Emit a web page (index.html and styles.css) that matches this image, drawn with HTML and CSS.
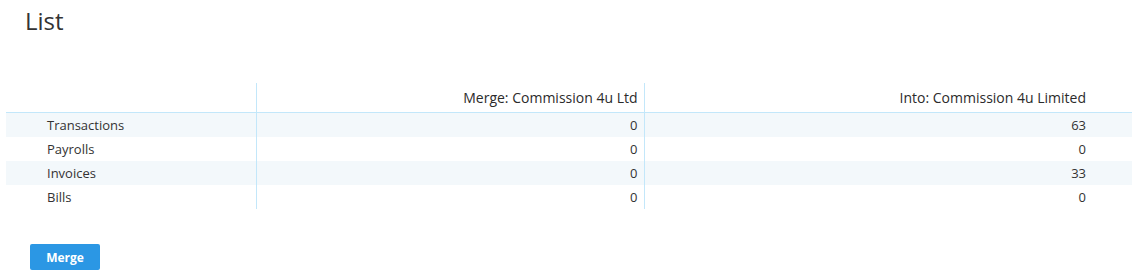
FILE: index.html
```html
<!DOCTYPE html>
<html>
<head>
<meta charset="utf-8">
<link rel="stylesheet" href="styles.css">
</head>
<body>
<div class="page">
  <h1 class="title">List</h1>
  <table class="merge-table">
    <colgroup>
      <col class="c-label">
      <col class="c-from">
      <col class="c-into">
    </colgroup>
    <thead>
      <tr>
        <th class="label"></th>
        <th class="num sep">Merge: Commission 4u Ltd</th>
        <th class="num sep last">Into: Commission 4u Limited</th>
      </tr>
    </thead>
    <tbody>
      <tr class="alt"><td class="label">Transactions</td><td class="num sep">0</td><td class="num sep last">63</td></tr>
      <tr><td class="label">Payrolls</td><td class="num sep">0</td><td class="num sep last">0</td></tr>
      <tr class="alt"><td class="label">Invoices</td><td class="num sep">0</td><td class="num sep last">33</td></tr>
      <tr><td class="label">Bills</td><td class="num sep">0</td><td class="num sep last">0</td></tr>
    </tbody>
  </table>
  <div class="actions">
    <button class="btn-primary">Merge</button>
  </div>
</div>
</body>
</html>
```
FILE: styles.css
```css
html, body {
  margin: 0;
  padding: 0;
  background: #fff;
  font-family: "Open Sans", "Liberation Sans", sans-serif;
  color: #333;
}
.page {
  padding: 0 0 0 6px;
}
.title {
  margin: 0;
  padding: 4px 0 0 19px;
  font-size: 24px;
  font-weight: 400;
  line-height: 33px;
  color: #333;
}
.merge-table {
  margin-top: 46px;
  width: 1126px;
  border-collapse: collapse;
  table-layout: fixed;
  font-size: 13px;
}
.c-label { width: 250px; }
.c-from { width: 388px; }
.merge-table th {
  height: 29px;
  padding: 0 6px 0 0;
  font-weight: 400;
  font-size: 14px;
  color: #2b2b2b;
  border-bottom: 1px solid #c3e7fa;
  vertical-align: middle;
}
.merge-table td {
  height: 24px;
  padding: 0 6px 0 0;
  line-height: 24px;
  color: #333;
}
.merge-table .label {
  text-align: left;
  padding-left: 41px;
}
.merge-table .num {
  text-align: right;
}
.merge-table .sep {
  border-left: 1px solid #c3e7fa;
}
.merge-table .last {
  padding-right: 46px;
}
.merge-table tr.alt td {
  background: #f3f8fb;
}
.actions {
  padding: 35px 0 0 24px;
}
.btn-primary {
  width: 70px;
  height: 26px;
  border: none;
  border-radius: 2px;
  background: #2b97e4;
  color: #fff;
  font-family: "Open Sans", "Liberation Sans", sans-serif;
  font-weight: 700;
  font-size: 12px;
  padding: 0;
  cursor: pointer;
}
```
